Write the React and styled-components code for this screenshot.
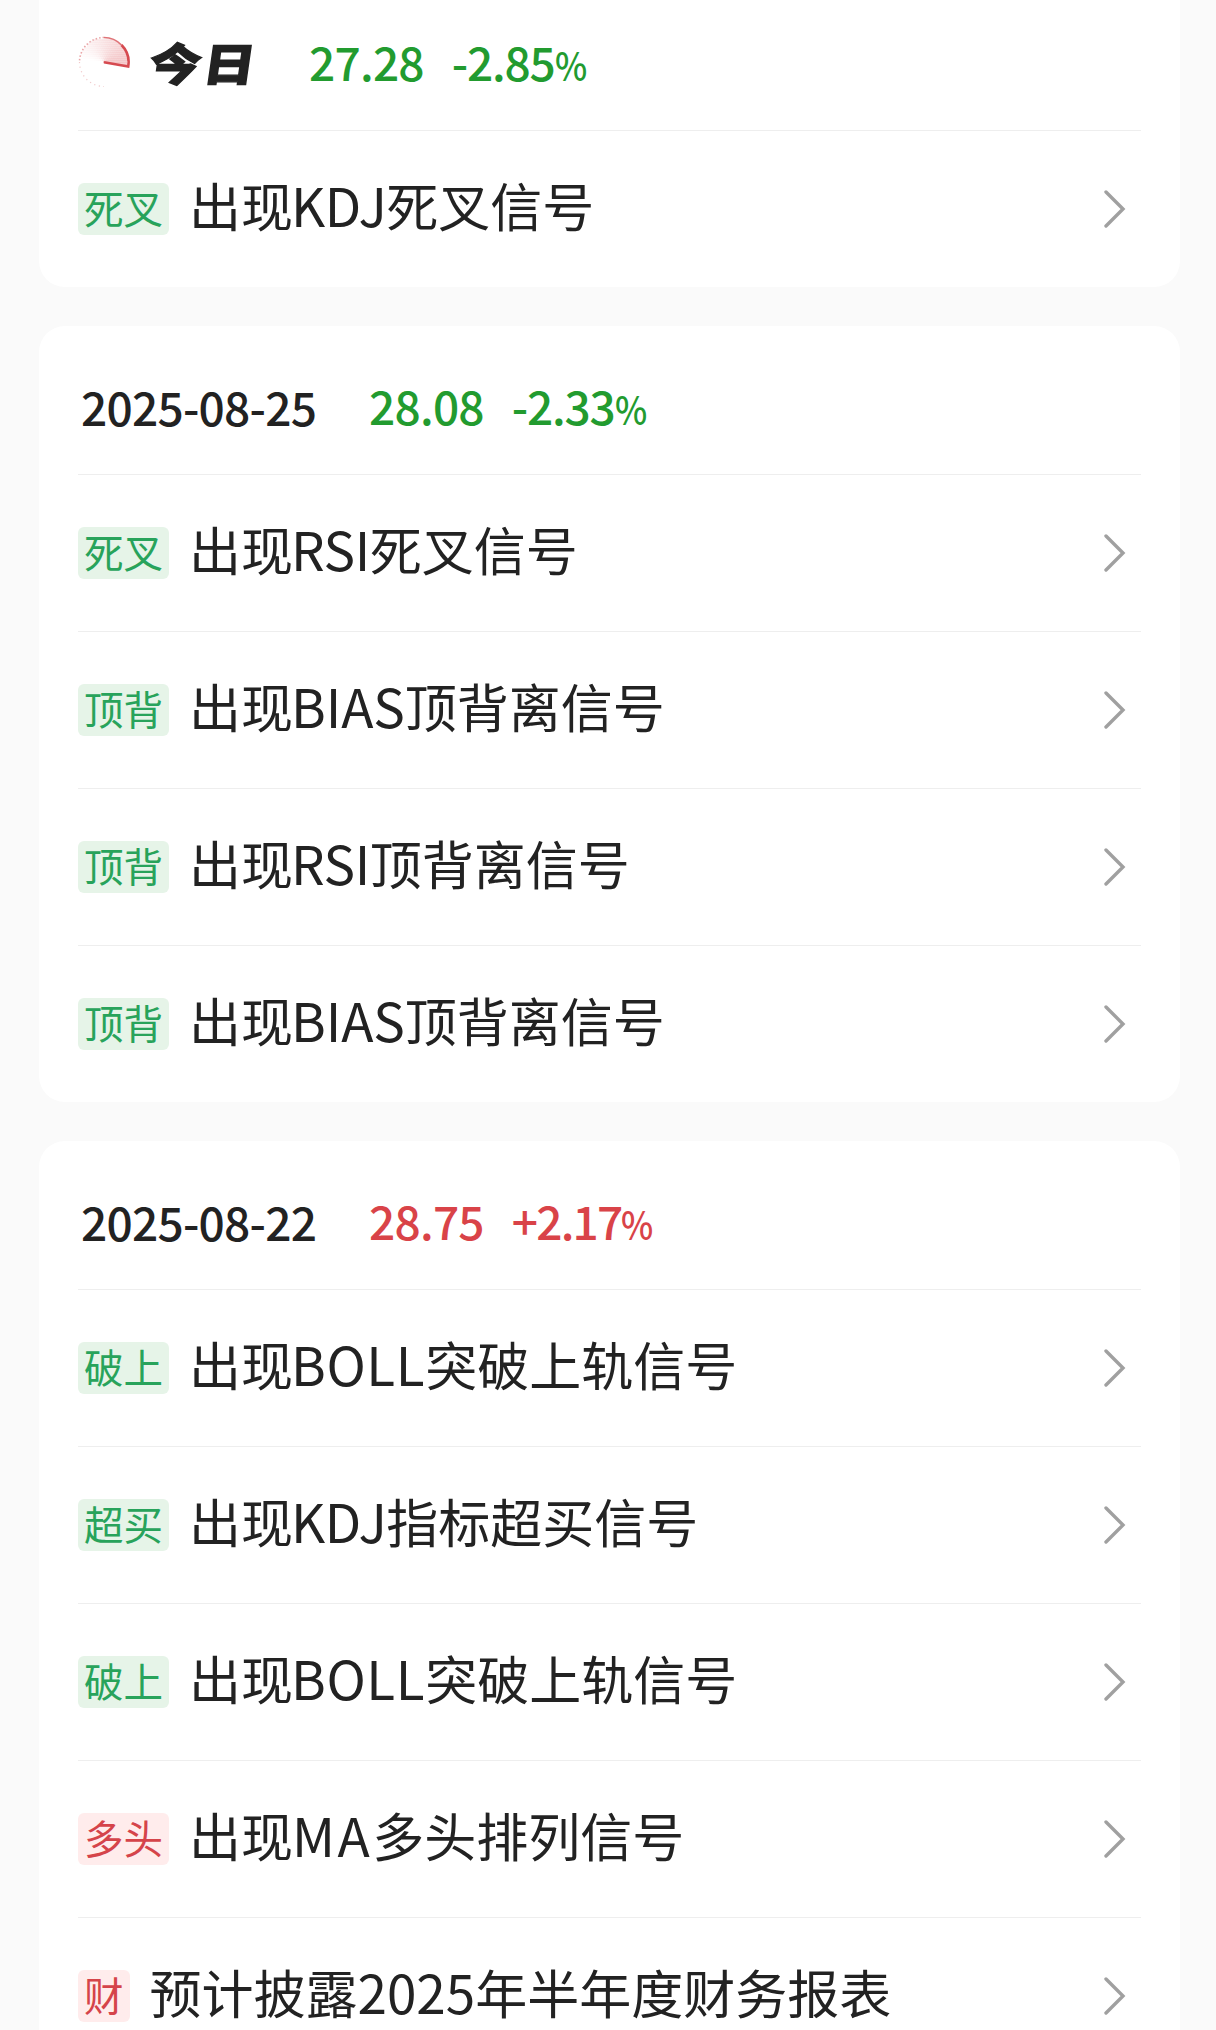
import styled, { createGlobalStyle } from "styled-components";

const GlobalStyle = createGlobalStyle`
  * {
    box-sizing: border-box;
  }

  body {
    margin: 0;
    background: #fafafa;
    font-family: "Noto Sans CJK SC", "Noto Sans", sans-serif;
    color: #222;
  }
`;

const Page = styled.main`
  display: flex;
  flex-direction: column;
  gap: 39px;
  width: 1216px;
  height: 2030px;
  padding: 0 36px 0 39px;
  overflow: hidden;
`;

const Card = styled.section`
  flex: none;
  padding: 0 39px;
  border-radius: ${(props) => (props.$first ? "0 0 26px 26px" : "26px")};
  background: #fff;
`;

const Header = styled.header`
  display: flex;
  align-items: center;
  height: ${(props) => (props.$today ? "130px" : "148px")};
  padding: ${(props) => (props.$today ? "0 0 6px" : "12px 0 0 3px")};
  font-size: 46px;
  font-weight: 500;
  letter-spacing: -0.75px;
  line-height: 60px;
  white-space: nowrap;
`;

const DateText = styled.span`
  width: 288px;
`;

const TodayWrapper = styled.div`
  display: flex;
  align-items: center;
  gap: 20px;
  width: 231px;
`;

const TodayText = styled.span`
  font-size: 49px;
  font-weight: 900;
  letter-spacing: 2px;
  -webkit-text-stroke: 1.4px #222;
  transform: scale(1.06, 0.91) skewX(-7deg);
  transform-origin: left center;
`;

const Quote = styled.div`
  display: flex;
  gap: 28px;
  color: ${(props) => (props.$up ? "#d94348" : "#229b2f")};
`;

const Change = styled.span`
  letter-spacing: ${(props) => (props.$up ? "-1.8px" : "-1.2px")};
`;

const Percent = styled.span`
  display: inline-block;
  font-size: 39px;
  transform: scaleX(0.88);
  transform-origin: left;
`;

const Row = styled.div`
  display: flex;
  align-items: center;
  height: 157px;
  padding-right: 15px;
  border-top: 1px solid #eee;
`;

const Badge = styled.span`
  flex: none;
  height: 52px;
  padding: 0 6px;
  border-radius: 6px;
  background: ${(props) => (props.$red ? "#ffecec" : "#e6f4e8")};
  color: ${(props) => (props.$red ? "#d5444a" : "#28a35b")};
  font-size: 39.5px;
  line-height: 47px;
`;

const Title = styled.span`
  flex: 1;
  margin-left: 20px;
  padding-bottom: 9px;
  font-size: 52px;
  line-height: 76px;
  white-space: nowrap;
`;

const Latin = styled.span`
  margin-left: ${(props) => props.$shift || 0}px;
  font-size: 53px;
  letter-spacing: ${(props) => props.$spacing || 0}px;
`;

const Arrow = styled.svg`
  flex: none;
  width: 22px;
  height: 40px;
`;

const Radar = styled.svg`
  flex: none;
  width: 52px;
  height: 52px;
`;

const groups = [
  {
    today: true,
    price: "27.28",
    change: "-2.85",
    signals: [{ tag: "死叉", text: ["出现", "KDJ", "死叉信号"], shift: -2, spacing: -0.5 }],
  },
  {
    date: "2025-08-25",
    price: "28.08",
    change: "-2.33",
    signals: [
      { tag: "死叉", text: ["出现", "RSI", "死叉信号"], shift: -2, spacing: -0.4 },
      { tag: "顶背", text: ["出现", "BIAS", "顶背离信号"], shift: -2, spacing: -0.1 },
      { tag: "顶背", text: ["出现", "RSI", "顶背离信号"], shift: -2, spacing: -0.4 },
      { tag: "顶背", text: ["出现", "BIAS", "顶背离信号"], shift: -2, spacing: -0.1 },
    ],
  },
  {
    date: "2025-08-22",
    price: "28.75",
    change: "+2.17",
    up: true,
    signals: [
      { tag: "破上", text: ["出现", "BOLL", "突破上轨信号"], shift: -2, spacing: 0.6 },
      { tag: "超买", text: ["出现", "KDJ", "指标超买信号"], shift: -2, spacing: -0.5 },
      { tag: "破上", text: ["出现", "BOLL", "突破上轨信号"], shift: -2, spacing: 0.6 },
      { tag: "多头", red: true, text: ["出现", "MA", "多头排列信号"], shift: -1, spacing: 2.5 },
      { tag: "财", red: true, text: ["预计披露", "2025", "年半年度财务报表"] },
    ],
  },
];

// dots of the sweep, fading counterclockwise from the leading edge
const dots = [];
for (let row = 0; row < 25; row++) {
  for (let col = 0; col < 25; col++) {
    const x = -24 + col * 2 + (row % 2);
    const y = -24 + row * 2;
    const sweep = (Math.atan2(-y, x) + 0.17 + Math.PI * 2) % (Math.PI * 2);
    const level = 1 - sweep / 3.2;
    if (Math.hypot(x, y) < 24 && level > 0) {
      dots.push({ x: x + 26, y: y + 26, o: level * 0.6 });
    }
  }
}

const RadarIcon = () => (
  <Radar viewBox="0 0 52 52" fill="none">
    {dots.map((dot) => (
      <circle key={`${dot.x}-${dot.y}`} cx={dot.x} cy={dot.y} r="0.85" fill="#d9474c" opacity={dot.o} />
    ))}
    <path d="M26 1.5A24.5 24.5 0 0 0 1.5 26" stroke="#df7478" strokeWidth="1.6" strokeDasharray="1.5 2" opacity="0.65" />
    <path d="M1.5 26A24.5 24.5 0 0 0 26 50.5" stroke="#e7a5a7" strokeWidth="1.2" strokeDasharray="1.2 3.5" opacity="0.6" />
    <path d="M26 1.5A24.5 24.5 0 0 1 43.5 9" stroke="#df7478" strokeWidth="1.7" />
    <path d="M43.5 9A24.5 24.5 0 0 1 50.2 30.5L26 26.3" stroke="#d64a50" strokeWidth="2.6" />
  </Radar>
);

const App = () => {
  return (
    <>
      <GlobalStyle />
      <Page>
        {groups.map((group) => (
          <Card key={group.date || "today"} $first={group.today}>
            <Header $today={group.today}>
              {group.today ? (
                <TodayWrapper>
                  <RadarIcon />
                  <TodayText>今日</TodayText>
                </TodayWrapper>
              ) : (
                <DateText>{group.date}</DateText>
              )}
              <Quote $up={group.up}>
                <span>{group.price}</span>
                <Change $up={group.up}>
                  {group.change}
                  <Percent>%</Percent>
                </Change>
              </Quote>
            </Header>
            {group.signals.map((signal, index) => (
              <Row key={index}>
                <Badge $red={signal.red}>{signal.tag}</Badge>
                <Title>
                  {signal.text[0]}
                  <Latin $shift={signal.shift} $spacing={signal.spacing}>
                    {signal.text[1]}
                  </Latin>
                  {signal.text[2]}
                </Title>
                <Arrow viewBox="0 0 22 40" fill="none">
                  <path d="M2 3L19 20L2 37" stroke="#a0a0a0" strokeWidth="3.4" strokeLinecap="round" />
                </Arrow>
              </Row>
            ))}
          </Card>
        ))}
      </Page>
    </>
  );
};

export default App;
